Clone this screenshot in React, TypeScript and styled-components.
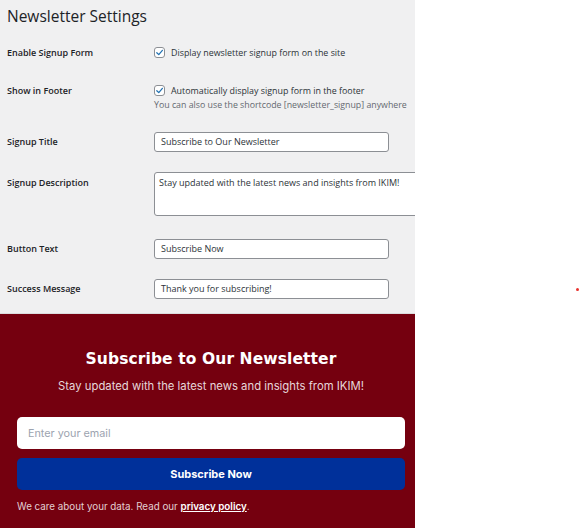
import React from "react";
import styled, { createGlobalStyle } from "styled-components";

const GlobalStyle = createGlobalStyle`
  html, body {
    margin: 0;
    padding: 0;
    background: #ffffff;
  }
  * { box-sizing: border-box; }
`;

const Page = styled.div`
  display: flex;
  width: 581px;
  height: 528px;
  overflow: hidden;
`;

const LeftColumn = styled.div`
  width: 415px;
  display: flex;
  flex-direction: column;
  flex-shrink: 0;
`;

const SettingsPanel = styled.section`
  height: 314px;
  background: #f0f0f1;
  border-bottom: 1px solid #dcdcde;
  padding: 6px 0 0 7px;
  overflow: hidden;
  display: flex;
  flex-direction: column;
  gap: 20px;
  font-family: "Open Sans", "Noto Sans", sans-serif;
  color: #1d2327;
`;

const PanelTitle = styled.h1`
  margin: 0 0 -1px;
  font-size: 15.5px;
  font-weight: 400;
  line-height: 20px;
  color: #1d2327;
`;

const Row = styled.div<{ $after?: number }>`
  display: grid;
  grid-template-columns: 147px 1fr;
  align-items: start;
  margin-bottom: ${(p) => p.$after ?? 0}px;
`;

const Label = styled.div<{ $line: number }>`
  font-size: 9px;
  font-weight: 600;
  line-height: ${(p) => p.$line}px;
  color: #1d2327;
  white-space: nowrap;
`;

const CheckLine = styled.label`
  display: flex;
  align-items: center;
  gap: 6px;
  height: 15px;
  font-size: 8.9px;
  color: #2c3338;
  white-space: nowrap;
`;

const Box = styled.span`
  width: 11px;
  height: 11px;
  border: 1px solid #8c8f94;
  border-radius: 3px;
  background: #fff;
  display: flex;
  align-items: center;
  justify-content: center;
  flex-shrink: 0;
`;

const Hint = styled.p`
  margin: 0;
  font-size: 8.8px;
  line-height: 15px;
  color: #646970;
  white-space: nowrap;
`;

const TextField = styled.div<{ $width: number; $height: number }>`
  width: ${(p) => p.$width}px;
  height: ${(p) => p.$height}px;
  background: #fff;
  border: 1px solid #8c8f94;
  border-radius: 3px;
  padding: ${(p) => (p.$height > 30 ? "3px 4px" : "0 6px")};
  display: flex;
  align-items: ${(p) => (p.$height > 30 ? "flex-start" : "center")};
  font-size: 9px;
  line-height: 14px;
  color: #2c3338;
  white-space: nowrap;
  flex-shrink: 0;
`;

const SignupBlock = styled.section`
  flex: 1;
  background: #75000f;
  padding: 34px 10px 0 17px;
  display: flex;
  flex-direction: column;
  font-family: Inter, "Liberation Sans", sans-serif;
  color: #fff;
`;

const SignupTitle = styled.h2`
  margin: 0;
  text-align: center;
  font-family: "DejaVu Sans", sans-serif;
  font-size: 15.5px;
  font-weight: 700;
  line-height: 22px;
  letter-spacing: 0.1px;
`;

const SignupText = styled.p`
  margin: 8px 0 0;
  text-align: center;
  font-size: 11.3px;
  line-height: 16px;
  color: rgba(255, 255, 255, 0.85);
`;

const SignupForm = styled.form`
  margin: 23px 0 0;
  display: flex;
  flex-direction: column;
  gap: 9px;
`;

const EmailInput = styled.div`
  height: 32px;
  background: #fff;
  border-radius: 5px;
  padding: 0 11px;
  display: flex;
  align-items: center;
  font-size: 10.8px;
  color: #9ca3af;
`;

const SubmitButton = styled.button`
  height: 32px;
  border: none;
  border-radius: 5px;
  background: #00309a;
  color: #fff;
  font-family: Inter, "Liberation Sans", sans-serif;
  font-size: 11px;
  font-weight: 700;
  cursor: pointer;
`;

const Privacy = styled.p`
  margin: 10px 0 0;
  font-size: 9.8px;
  line-height: 14px;
  color: rgba(255, 255, 255, 0.82);
`;

const PrivacyLink = styled.a`
  color: #fff;
  font-weight: 600;
  text-decoration: underline;
`;

const Blank = styled.div`
  flex: 1;
  position: relative;
  background: #fff;
`;

const Dot = styled.span`
  position: absolute;
  left: 161px;
  top: 288px;
  width: 3px;
  height: 3px;
  border-radius: 50%;
  background: #e8322e;
`;

function Check() {
  return (
    <Box>
      <svg width="9" height="9" viewBox="0 0 10 10">
        <path d="M2 5.2 L4.2 7.4 L8.2 2.6" fill="none" stroke="#2271b1" strokeWidth="1.4" strokeLinecap="round" strokeLinejoin="round" />
      </svg>
    </Box>
  );
}

export default function App() {
  return (
    <>
      <GlobalStyle />
      <Page>
        <LeftColumn>
          <SettingsPanel>
            <PanelTitle>Newsletter Settings</PanelTitle>

            <Row $after={2}>
              <Label $line={16}>Enable Signup Form</Label>
              <CheckLine>
                <Check />
                Display newsletter signup form on the site
              </CheckLine>
            </Row>

            <Row $after={-1}>
              <Label $line={15}>Show in Footer</Label>
              <div>
                <CheckLine>
                  <Check />
                  Automatically display signup form in the footer
                </CheckLine>
                <Hint>You can also use the shortcode [newsletter_signup] anywhere</Hint>
              </div>
            </Row>

            <Row>
              <Label $line={20}>Signup Title</Label>
              <TextField $width={235} $height={20}>Subscribe to Our Newsletter</TextField>
            </Row>

            <Row $after={3}>
              <Label $line={22}>Signup Description</Label>
              <TextField $width={290} $height={44}>
                Stay updated with the latest news and insights from IKIM!
              </TextField>
            </Row>

            <Row>
              <Label $line={20}>Button Text</Label>
              <TextField $width={235} $height={20}>Subscribe Now</TextField>
            </Row>

            <Row>
              <Label $line={20}>Success Message</Label>
              <TextField $width={235} $height={20}>Thank you for subscribing!</TextField>
            </Row>
          </SettingsPanel>

          <SignupBlock>
            <SignupTitle>Subscribe to Our Newsletter</SignupTitle>
            <SignupText>Stay updated with the latest news and insights from IKIM!</SignupText>
            <SignupForm onSubmit={(e) => e.preventDefault()}>
              <EmailInput>Enter your email</EmailInput>
              <SubmitButton type="submit">Subscribe Now</SubmitButton>
            </SignupForm>
            <Privacy>
              We care about your data. Read our <PrivacyLink href="#">privacy policy</PrivacyLink>.
            </Privacy>
          </SignupBlock>
        </LeftColumn>
        <Blank>
          <Dot />
        </Blank>
      </Page>
    </>
  );
}
